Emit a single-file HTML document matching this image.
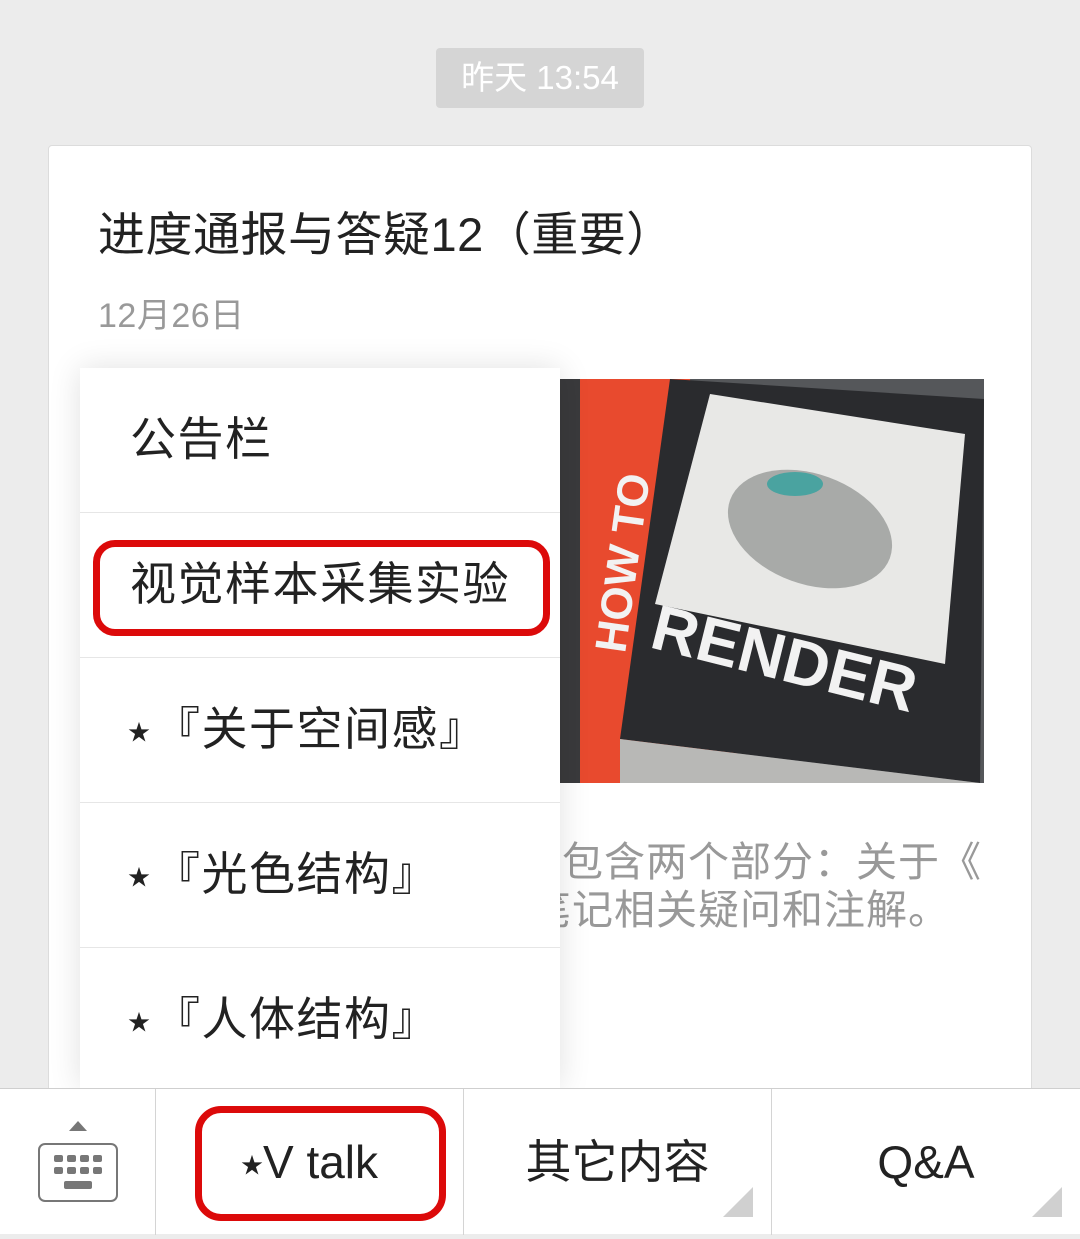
<!DOCTYPE html>
<html><head><meta charset="utf-8">
<style>
*{margin:0;padding:0;box-sizing:border-box}
body{width:1080px;height:1234px;background:#ececec;overflow:hidden;position:relative;font-family:"Liberation Sans","Noto Sans CJK SC",sans-serif}
.ts{position:absolute;left:436px;top:48px;width:208px;height:60px;background:#d5d5d5;border-radius:4px;color:#fff;font-size:33px;line-height:60px;text-align:center}
.card{position:absolute;left:48px;top:145px;width:984px;height:1000px;background:#fff;border:1px solid #dcdcdc;border-radius:4px}
.title{position:absolute;left:98px;top:196px;font-size:47px;color:#222;white-space:nowrap;letter-spacing:0.5px}
.date{position:absolute;left:98px;top:288px;font-size:34px;color:#999;letter-spacing:0.5px}
.img{position:absolute;left:560px;top:379px;width:424px;height:404px}
.dl{position:absolute;font-size:41px;line-height:48px;color:#999;white-space:nowrap;letter-spacing:1px}
.menu{position:absolute;left:80px;top:368px;width:480px;height:720px;background:#fff;box-shadow:0 0 30px rgba(0,0,0,.12)}
.item{height:145px;border-bottom:1px solid #e6e6e6;font-size:46px;color:#222;line-height:142px;padding-left:50px;white-space:nowrap;letter-spacing:1.5px}
.item .s{font-size:22px;vertical-align:middle;margin-right:4px;letter-spacing:0}
.item.st{padding-left:48px}
.red{position:absolute;border:7px solid #dc0a0a;border-radius:22px}
.bar{position:absolute;left:0;top:1088px;width:1080px;height:146px;background:#fff;border-top:1px solid #cfcfcf}
.cell{position:absolute;top:0;height:146px;border-left:1px solid #d4d4d4;text-align:center;line-height:146px;font-size:46px;color:#222}
.tri{position:absolute;right:18px;bottom:18px;width:0;height:0;border-left:30px solid transparent;border-bottom:30px solid #d0d0d0}
</style></head><body>
<div class="ts">昨天 13:54</div>
<div class="card"></div>
<div class="title">进度通报与答疑12（重要）</div>
<div class="date">12月26日</div>
<svg class="img" viewBox="0 0 424 404">
<rect width="424" height="404" fill="#55575a"/>
<polygon points="0,0 130,0 180,404 0,404" fill="#e84a2e"/>
<polygon points="0,0 20,0 20,404 0,404" fill="#3a3a3c"/>
<polygon points="110,0 424,20 420,404 60,360" fill="#2a2b2e"/>
<polygon points="150,15 405,55 385,285 95,225" fill="#e8e8e6"/>
<polygon points="60,360 420,404 60,404" fill="#b8b8b6"/>
<ellipse cx="250" cy="150" rx="85" ry="55" fill="#a8aaa8" transform="rotate(20 250 150)"/>
<ellipse cx="235" cy="105" rx="28" ry="12" fill="#4aa3a0"/>
<text x="0" y="0" transform="translate(88 268) rotate(14)" font-family="Liberation Sans" font-weight="bold" font-size="64" fill="#f2f2f2">RENDER</text>
<text x="0" y="0" transform="translate(65 275) rotate(-82)" font-family="Liberation Sans" font-weight="bold" font-size="44" fill="#f2f2f2">HOW TO</text>
</svg>
<div class="dl" style="left:520px;top:838px">文包含两个部分：关于《</div>
<div class="dl" style="left:530px;top:886px">笔记相关疑问和注解。</div>
<div class="menu">
<div class="item">公告栏</div>
<div class="item">视觉样本采集实验</div>
<div class="item st"><span class="s">★</span>『关于空间感』</div>
<div class="item st"><span class="s">★</span>『光色结构』</div>
<div class="item st" style="border-bottom:none"><span class="s">★</span>『人体结构』</div>
</div>
<div class="red" style="left:93px;top:540px;width:457px;height:96px"></div>
<div class="bar">
<div class="cell" style="left:0;width:155px;border-left:none">
<div style="position:absolute;left:69px;top:32px;width:0;height:0;border-left:9px solid transparent;border-right:9px solid transparent;border-bottom:10px solid #777"></div>
<div style="position:absolute;left:38px;top:54px;width:80px;height:59px;border:2px solid #777;border-radius:7px"></div>
<svg style="position:absolute;left:54px;top:66px" width="48" height="36"><g fill="#777"><rect x="0" y="0" width="9" height="7" rx="2"/><rect x="13" y="0" width="9" height="7" rx="2"/><rect x="26" y="0" width="9" height="7" rx="2"/><rect x="39" y="0" width="9" height="7" rx="2"/><rect x="0" y="12" width="9" height="7" rx="2"/><rect x="13" y="12" width="9" height="7" rx="2"/><rect x="26" y="12" width="9" height="7" rx="2"/><rect x="39" y="12" width="9" height="7" rx="2"/><rect x="10" y="26" width="28" height="8" rx="2"/></g></svg>
</div>
<div class="cell" style="left:155px;width:308px"><span style="font-size:22px;vertical-align:middle">★</span>V talk</div>
<div class="cell" style="left:463px;width:308px">其它内容<div class="tri"></div></div>
<div class="cell" style="left:771px;width:309px">Q&amp;A<div class="tri"></div></div>
</div>
<div class="red" style="left:195px;top:1106px;width:251px;height:115px;border-radius:26px"></div>
</body></html>
